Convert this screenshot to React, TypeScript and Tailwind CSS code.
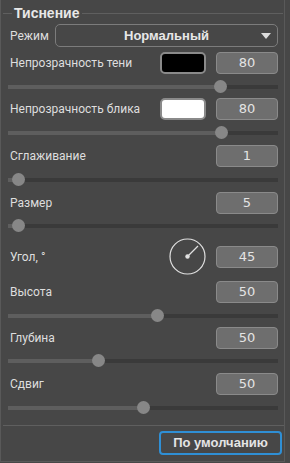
import React from 'react'

const Num = ({ value }: { value: string }) => (
    <div className="w-[62px] h-[22px] rounded-[4px] border border-[#8a8a8a] bg-[#6e6e6e] flex items-center justify-center text-[13px] text-[#e4e4e4] font-['DejaVu_Sans',sans-serif]">
        {value}
    </div>
)

const Slider = ({ pos, className }: { pos: number; className: string }) => (
    <div className={"relative h-[13px] ml-[7px] mr-[6px] flex items-center " + className}>
        <div className="h-[4px] bg-[#5e5e5e]" style={{ width: pos }} />
        <div className="h-[4px] flex-1 bg-[#3a3a3a]" />
        <div className="absolute top-0 w-[13px] h-[13px] rounded-full bg-[#878787]" style={{ left: pos - 7 }} />
    </div>
)

const Row = ({ label, children, className }: { label: string; children: React.ReactNode; className: string }) => (
    <div className={"flex items-center justify-between pl-[9px] pr-[6px] " + className}>
        <span className="text-[12px]">{label}</span>
        <div className="flex items-center gap-[10px]">{children}</div>
    </div>
)

export default function App() {
    return (
        <div className="w-[290px] h-[463px] bg-[#474747] flex font-['Roboto',sans-serif] text-[#dedede]">
            <div className="w-[285px] h-[462px] border-l border-r border-b border-[#595959] flex flex-col">
                <div className="mt-[4px] h-[18px] flex items-center pl-[2px] pr-[1px]">
                    <div className="w-[9px] h-px bg-[#5f5f5f]" />
                    <span className="px-[2px] text-[14px] font-bold text-[#e8e8e8] font-['Liberation_Sans',sans-serif]">Тиснение</span>
                    <div className="flex-1 h-px bg-[#5f5f5f]" />
                </div>

                <div className="mt-[2px] flex items-center pl-[9px] pr-[6px] h-[23px]">
                    <span className="text-[12px] w-[45px]">Режим</span>
                    <div className="flex-1 h-[23px] rounded-[5px] border border-[#7c7c7c] relative flex items-center justify-center">
                        <span className="text-[13px] font-bold text-[#e8e8e8] font-['Liberation_Sans',sans-serif]">Нормальный</span>
                        <svg className="absolute right-[6px] top-[8px]" width="10" height="7" viewBox="0 0 10 7">
                            <path d="M0 0 H10 L5 6 Z" fill="#dcdcdc" />
                        </svg>
                    </div>
                </div>

                <Row label="Непрозрачность тени" className="mt-[5px] h-[22px]">
                    <div className="w-[46px] h-[22px] rounded-[5px] border-2 border-[#8a8a8a] bg-black" />
                    <Num value="80" />
                </Row>
                <Slider pos={213} className="mt-[6px]" />

                <Row label="Непрозрачность блика" className="mt-[5px] h-[22px]">
                    <div className="w-[46px] h-[22px] rounded-[5px] border-2 border-[#8a8a8a] bg-white" />
                    <Num value="80" />
                </Row>
                <Slider pos={214} className="mt-[6px]" />

                <Row label="Сглаживание" className="mt-[6px] h-[22px]">
                    <Num value="1" />
                </Row>
                <Slider pos={11} className="mt-[6px]" />

                <Row label="Размер" className="mt-[6px] h-[22px]">
                    <Num value="5" />
                </Row>
                <Slider pos={11} className="mt-[5px]" />

                <Row label="Угол, °" className="mt-[6px] h-[37px]">
                    <svg width="37" height="37" viewBox="0 0 37 37">
                        <circle cx="18.5" cy="18.5" r="17.5" fill="none" stroke="#e0e0e0" strokeWidth="1.2" />
                        <line x1="18.5" y1="18.5" x2="29" y2="8" stroke="#e0e0e0" strokeWidth="1.2" />
                        <circle cx="18.5" cy="18.5" r="2.2" fill="#e0e0e0" />
                    </svg>
                    <Num value="45" />
                </Row>

                <Row label="Высота" className="mt-[6px] h-[22px]">
                    <Num value="50" />
                </Row>
                <Slider pos={150} className="mt-[6px]" />

                <Row label="Глубина" className="mt-[5px] h-[22px]">
                    <Num value="50" />
                </Row>
                <Slider pos={91} className="mt-[5px]" />

                <Row label="Сдвиг" className="mt-[6px] h-[22px]">
                    <Num value="50" />
                </Row>
                <Slider pos={136} className="mt-[6px]" />

                <div className="mt-[11px] ml-[2px] h-px bg-[#5f5f5f]" />

                <div className="mt-[5px] flex justify-end pr-[2px]">
                    <button className="w-[123px] h-[24px] rounded-[4px] border-2 border-[#2f8fd5] text-[13px] font-bold text-[#e4e4e4] font-['Liberation_Sans',sans-serif]">
                        По умолчанию
                    </button>
                </div>
            </div>
        </div>
    )
}
